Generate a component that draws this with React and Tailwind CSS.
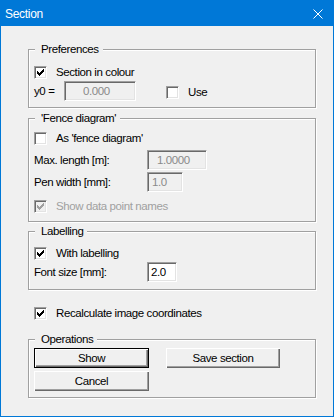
import React from 'react';

const Check = ({ checked, disabled }) => (
  <div
    className={`w-[13px] h-[13px] shrink-0 border-t border-l border-t-[#a0a0a0] border-l-[#a0a0a0] border-b border-r border-b-white border-r-white shadow-[inset_1px_1px_0_#696969,inset_-1px_-1px_0_#e3e3e3] flex items-center justify-center ${
      disabled ? 'bg-[#f0f0f0]' : 'bg-white'
    }`}
  >
    {checked && (
      <svg width="7" height="7" viewBox="0 0 7 7" shapeRendering="crispEdges">
        <path
          d="M0 2h1v1h1v1h1v-1h1v-1h1v-1h1v-1h1v3h-1v1h-1v1h-1v1h-1v1h-1v-1h-1v-1h-1v-1h-1z"
          fill={disabled ? '#a0a0a0' : '#000'}
        />
      </svg>
    )}
  </div>
);

const CheckRow = ({ checked, disabled, label, className = '' }) => (
  <div className={`flex items-center h-[13px] gap-[9px] ${className}`}>
    <Check checked={checked} disabled={disabled} />
    <span className={`leading-[13px] whitespace-nowrap ${disabled ? 'text-[#a0a0a0]' : 'text-black'}`}>{label}</span>
  </div>
);

const Field = ({ value, disabled, className = '' }) => (
  <div
    className={`h-[20px] border-t border-l border-t-[#a0a0a0] border-l-[#a0a0a0] border-b border-r border-b-white border-r-white shadow-[inset_1px_1px_0_#696969,inset_-1px_-1px_0_#e3e3e3] flex items-center leading-[13px] ${
      disabled ? 'bg-[#f0f0f0] text-[#8a8a8a]' : 'bg-white text-black'
    } ${className}`}
  >
    {value}
  </div>
);

const Button = ({ children, isDefault, className = '' }) => (
  <div
    className={`h-[20px] flex items-center justify-center bg-[#f0f0f0] leading-[13px] ${
      isDefault
        ? 'border border-black shadow-[inset_1px_1px_0_#fff,inset_-1px_-1px_0_#696969,inset_-2px_-2px_0_#a0a0a0]'
        : 'shadow-[inset_1px_1px_0_#fff,inset_-1px_-1px_0_#696969,inset_-2px_-2px_0_#a0a0a0]'
    } ${className}`}
  >
    {children}
  </div>
);

const Group = ({ title, className = '', children }) => (
  <div
    className={`border border-[#a0a0a0] shadow-[inset_1px_1px_0_#fff,1px_1px_0_#fff] pl-[5px] ${className}`}
  >
    <div className="-mt-[8px] ml-[1px] pl-[6px] pr-[4px] w-fit h-[14px] leading-[14px] bg-[#f0f0f0]">
      {title}
    </div>
    {children}
  </div>
);

export default function App() {
  return (
    <div className="w-[334px] h-[417px] bg-[#0078d7] p-px flex flex-col font-['Liberation_Sans',Arial,sans-serif]">
      <div className="h-[25px] shrink-0 flex items-center justify-between pl-[4px] pr-[10px] text-white text-[12px] tracking-[-0.3px]">
        <span>Section</span>
        <svg width="10" height="10" viewBox="0 0 10 10">
          <path d="M0.5 0.5L9.5 9.5M9.5 0.5L0.5 9.5" stroke="#fff" strokeWidth="1" />
        </svg>
      </div>
      <div className="flex-1 bg-[#f0f0f0] pl-[27px] pr-[17px] text-[11.5px] tracking-[-0.4px] text-black">
        <Group title="Preferences" className="mt-[23px] pb-[6px]">
          <CheckRow checked label="Section in colour" className="mt-[10px]" />
          <div className="mt-[2px] h-[20px] flex items-center">
            <span className="w-[30px] leading-[13px]">y0 =</span>
            <Field value="0.000" disabled className="w-[72px] pl-[18px]" />
            <CheckRow label="Use" className="ml-[30px] mt-[2px]" />
          </div>
        </Group>

        <Group title="'Fence diagram'" className="mt-[10px] pb-[8px]">
          <CheckRow label="As 'fence diagram'" className="mt-[7px]" />
          <div className="mt-[5px] h-[20px] flex items-center">
            <span className="w-[113px] leading-[13px]">Max. length [m]:</span>
            <Field value="1.0000" disabled className="w-[60px] pl-[9px]" />
          </div>
          <div className="mt-[2px] h-[20px] flex items-center">
            <span className="w-[113px] leading-[13px]">Pen width [mm]:</span>
            <Field value="1.0" disabled className="w-[36px] pl-[4px]" />
          </div>
          <CheckRow checked disabled label="Show data point names" className="mt-[8px]" />
        </Group>

        <Group title="Labelling" className="mt-[9px] pb-[7px]">
          <CheckRow checked label="With labelling" className="mt-[9px]" />
          <div className="mt-[2px] h-[20px] flex items-center">
            <span className="w-[113px] leading-[13px]">Font size [mm]:</span>
            <Field value="2.0" className="w-[30px] pl-[3px]" />
          </div>
        </Group>

        <CheckRow checked label="Recalculate image coordinates" className="mt-[17px] pl-[6px]" />

        <Group title="Operations" className="mt-[19px] pb-[6px]">
          <div className="mt-[2px] flex">
            <Button isDefault className="w-[115px]">Show</Button>
            <Button className="w-[114px] ml-[17px]">Save section</Button>
          </div>
          <Button className="w-[115px] mt-[3px]">Cancel</Button>
        </Group>
      </div>
    </div>
  );
}
